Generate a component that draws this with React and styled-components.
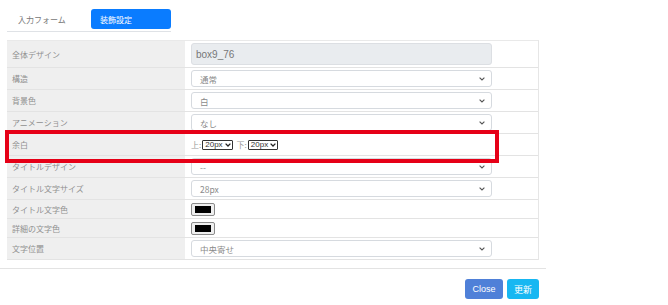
import React from "react";
import styled, { createGlobalStyle } from "styled-components";

const Global = createGlobalStyle`
  html, body { margin: 0; padding: 0; background: #fff; }
  body { font-family: "Noto Sans CJK JP", "Noto Sans", "Liberation Sans", sans-serif; }
  * { box-sizing: border-box; }
`;

const Modal = styled.div`
  width: 546px;
  background: #fff;
`;

const Body = styled.div`
  padding: 9px 7px 8px;
`;

const Nav = styled.div`
  display: flex;
  width: fit-content;
  gap: 4px;
  padding-bottom: 2px;
  border-bottom: 1px solid #dfe2e6;
`;

const Tab = styled.div`
  width: 80px;
  height: 20px;
  padding-left: ${(p) => (p.$active ? "9px" : "11px")};
  display: flex;
  align-items: center;
  font-size: 8px;
  border-radius: 3px;
  color: ${(p) => (p.$active ? "#fff" : "#777")};
  background: ${(p) => (p.$active ? "#0a7cff" : "transparent")};
`;

const TableWrap = styled.div`
  position: relative;
  margin-top: 8px;
`;

const Table = styled.div`
  width: 532px;
  border-top: 1px solid #e9e9e9;
  border-right: 1px solid #e6e6e6;
`;

const Row = styled.div`
  display: grid;
  grid-template-columns: 178px 1fr;
  border-bottom: 1px solid #e3e3e3;
`;

const Label = styled.div`
  background: #efefef;
  color: #8f8f8f;
  font-size: 8px;
  padding-left: 5px;
  display: flex;
  align-items: center;
`;

const Value = styled.div`
  padding: ${(p) => p.$pad || "2px"} 6px;
  display: flex;
  align-items: center;
  background: #fff;
`;

const TextBox = styled.div`
  width: 301px;
  height: 22px;
  border-radius: 3px;
  background: #e9ecef;
  border: 1px solid #dcdfe3;
  color: #777;
  font-family: "Liberation Sans", "Noto Sans CJK JP", sans-serif;
  font-size: 10px;
  padding-left: 4px;
  display: flex;
  align-items: center;
`;

const SelectBox = styled.div`
  width: 301px;
  height: 17px;
  border-radius: 3px;
  border: 1px solid #d6dadf;
  background: #fff;
  color: #8a8a8a;
  font-size: 8.5px;
  padding: 0 6px 0 8px;
  display: flex;
  align-items: center;
  justify-content: space-between;
`;

const Chevron = () => (
  <svg width="6" height="4" viewBox="0 0 6 4">
    <path d="M0.6 0.6 L3 3 L5.4 0.6" fill="none" stroke="#555" strokeWidth="1.1" />
  </svg>
);

const Select = ({ children }) => (
  <SelectBox>
    <span>{children}</span>
    <Chevron />
  </SelectBox>
);

const Inline = styled.div`
  height: 17px;
  display: flex;
  align-items: center;
  gap: 1px;
  font-size: 8px;
  color: #999;
`;

const MiniSelect = styled.div`
  height: 10px;
  border: 1px solid #333;
  border-radius: 1px;
  display: flex;
  align-items: center;
  gap: 2px;
  padding: 0 1px 0 2px;
  font-family: "Liberation Sans Narrow", "Liberation Sans", sans-serif;
  font-size: 8px;
  color: #333;
  margin-right: 3px;
`;

const MiniChevron = () => (
  <svg width="6" height="4" viewBox="0 0 6 4">
    <path d="M0.6 0.6 L3 3 L5.4 0.6" fill="none" stroke="#222" strokeWidth="1.3" />
  </svg>
);

const ColorInput = styled.div`
  width: 24px;
  height: 13px;
  border: 1px solid #8a8a8a;
  border-radius: 2px;
  background: #efefef;
  padding: 2px 3px;
  &::after {
    content: "";
    display: block;
    width: 100%;
    height: 100%;
    background: ${(p) => p.$color};
  }
`;

const Highlight = styled.div`
  position: absolute;
  top: 90px;
  left: -2px;
  width: 494px;
  height: 33px;
  border: 4px solid #e60017;
  pointer-events: none;
`;

const Footer = styled.div`
  border-top: 1px solid #e3e3e3;
  padding: 10px 7px 7px;
  display: flex;
  justify-content: flex-end;
  gap: 4px;
`;

const Button = styled.div`
  height: 20px;
  padding: 0 ${(p) => p.$px || "7.5px"};
  border-radius: 3px;
  background: ${(p) => p.$bg};
  color: #fff;
  font-family: "Liberation Sans", "Noto Sans CJK JP", sans-serif;
  font-size: 9px;
  display: flex;
  align-items: center;
`;

export default function App() {
  return (
    <>
      <Global />
      <Modal>
        <Body>
          <Nav>
            <Tab>入力フォーム</Tab>
            <Tab $active>装飾設定</Tab>
          </Nav>
          <TableWrap>
            <Table>
              <Row>
                <Label>全体デザイン</Label>
                <Value>
                  <TextBox>box9_76</TextBox>
                </Value>
              </Row>
              <Row>
                <Label>構造</Label>
                <Value><Select>通常</Select></Value>
              </Row>
              <Row>
                <Label>背景色</Label>
                <Value><Select>白</Select></Value>
              </Row>
              <Row>
                <Label>アニメーション</Label>
                <Value><Select>なし</Select></Value>
              </Row>
              <Row>
                <Label>余白</Label>
                <Value>
                  <Inline>
                    上:
                    <MiniSelect>20px<MiniChevron /></MiniSelect>
                    下:
                    <MiniSelect>20px<MiniChevron /></MiniSelect>
                  </Inline>
                </Value>
              </Row>
              <Row>
                <Label>タイトルデザイン</Label>
                <Value><Select>--</Select></Value>
              </Row>
              <Row>
                <Label>タイトル文字サイズ</Label>
                <Value><Select>28px</Select></Value>
              </Row>
              <Row>
                <Label>タイトル文字色</Label>
                <Value $pad="2.5px"><ColorInput $color="#000" /></Value>
              </Row>
              <Row>
                <Label>詳細の文字色</Label>
                <Value $pad="2.5px"><ColorInput $color="#000" /></Value>
              </Row>
              <Row>
                <Label>文字位置</Label>
                <Value><Select>中央寄せ</Select></Value>
              </Row>
            </Table>
            <Highlight />
          </TableWrap>
        </Body>
        <Footer>
          <Button $bg="#4f80d8">Close</Button>
          <Button $bg="#17b7f2" $px="7px">更新</Button>
        </Footer>
      </Modal>
    </>
  );
}
